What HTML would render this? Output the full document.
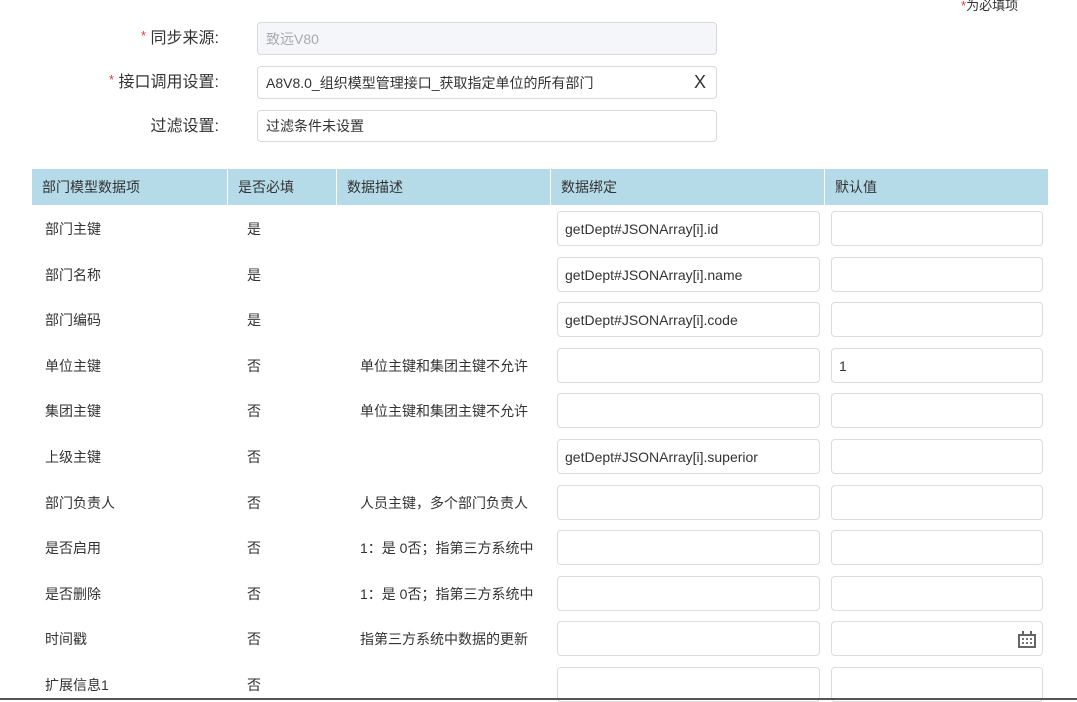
<!DOCTYPE html>
<html><head><meta charset="utf-8"><style>
*{box-sizing:border-box;margin:0;padding:0}
body{width:1077px;height:700px;overflow:hidden;background:#fff;position:relative;font-family:"Liberation Sans","Noto Sans CJK SC",sans-serif;font-size:14px;color:#333}
.a{position:absolute;white-space:nowrap}
.lbl{position:absolute;right:858px;font-size:16px;color:#333;white-space:nowrap;line-height:22px}
.lbl i{color:#e33;font-style:normal;font-size:13px;position:relative;top:-3px}
.in{position:absolute;border:1px solid #d9d9d9;border-radius:4px;background:#fff;padding-left:8px;display:flex;align-items:center;white-space:nowrap;overflow:hidden}
.hd{position:absolute;top:169px;height:36px;background:#b5dbe9;line-height:36px;padding-left:10px;color:#333}
.bi{position:absolute;border:1px solid #dcdce0;border-radius:4px;height:35px;display:flex;align-items:center;padding-left:7px;font-size:14px}
</style></head><body>
<div class="a" style="left:961px;top:-5px;font-size:13px"><span style="color:#e33">*</span>为必填项</div>
<div class="lbl" style="top:28px"><i>*</i> 同步来源:</div>
<div class="lbl" style="top:72px"><i>*</i> 接口调用设置:</div>
<div class="lbl" style="top:116px">过滤设置:</div>
<div class="in" style="left:257px;top:22px;width:460px;height:33px;background:#f5f6fa;color:#aaa">致远V80</div>
<div class="in" style="left:257px;top:66px;width:460px;height:33px">A8V8.0_组织模型管理接口_获取指定单位的所有部门<span style="position:absolute;right:10px;font-size:18px;color:#333">X</span></div>
<div class="in" style="left:257px;top:110px;width:460px;height:32px">过滤条件未设置</div>
<div class="hd" style="left:32px;width:195px">部门模型数据项</div>
<div class="hd" style="left:228px;width:108px">是否必填</div>
<div class="hd" style="left:337px;width:213px">数据描述</div>
<div class="hd" style="left:551px;width:273px">数据绑定</div>
<div class="hd" style="left:825px;width:223px">默认值</div>
<div id="rows"></div>
<div style="position:absolute;left:0;top:698px;width:1077px;height:2px;background:#555"></div>
<script>
var d=[["部门主键","是","","getDept#JSONArray[i].id",""],["部门名称","是","","getDept#JSONArray[i].name",""],["部门编码","是","","getDept#JSONArray[i].code",""],["单位主键","否","单位主键和集团主键不允许","","1"],["集团主键","否","单位主键和集团主键不允许","",""],["上级主键","否","","getDept#JSONArray[i].superior",""],["部门负责人","否","人员主键，多个部门负责人","",""],["是否启用","否","1：是  0否；指第三方系统中","",""],["是否删除","否","1：是  0否；指第三方系统中","",""],["时间戳","否","指第三方系统中数据的更新","","CAL"],["扩展信息1","否","","",""]];
var h="";
d.forEach(function(r,i){var t=Math.round(211+i*45.6);var c=t+8;
h+='<div class="a" style="left:45px;top:'+c+'px">'+r[0]+'</div>';
h+='<div class="a" style="left:247px;top:'+c+'px">'+r[1]+'</div>';
h+='<div class="a" style="left:360px;top:'+c+'px;width:180px;overflow:hidden">'+r[2]+'</div>';
h+='<div class="bi" style="left:557px;top:'+t+'px;width:263px">'+r[3]+'</div>';
var v=r[4]=="CAL"?'<svg style="position:absolute;right:6px;top:9px" width="18" height="17" viewBox="0 0 18 17"><rect x="0" y="3" width="18" height="14" fill="#666"/><rect x="4" y="0" width="2" height="5" fill="#666"/><rect x="12" y="0" width="2" height="5" fill="#666"/><rect x="2" y="5" width="14" height="10" fill="#fff"/><g fill="#777"><rect x="4" y="7" width="2" height="2"/><rect x="8" y="7" width="2" height="2"/><rect x="12" y="7" width="2" height="2"/><rect x="4" y="11" width="2" height="2"/><rect x="8" y="11" width="2" height="2"/><rect x="12" y="11" width="2" height="2"/></g></svg>':r[4];
h+='<div class="bi" style="left:831px;top:'+t+'px;width:212px">'+v+'</div>';});
document.getElementById("rows").innerHTML=h;
</script>
</body></html>
